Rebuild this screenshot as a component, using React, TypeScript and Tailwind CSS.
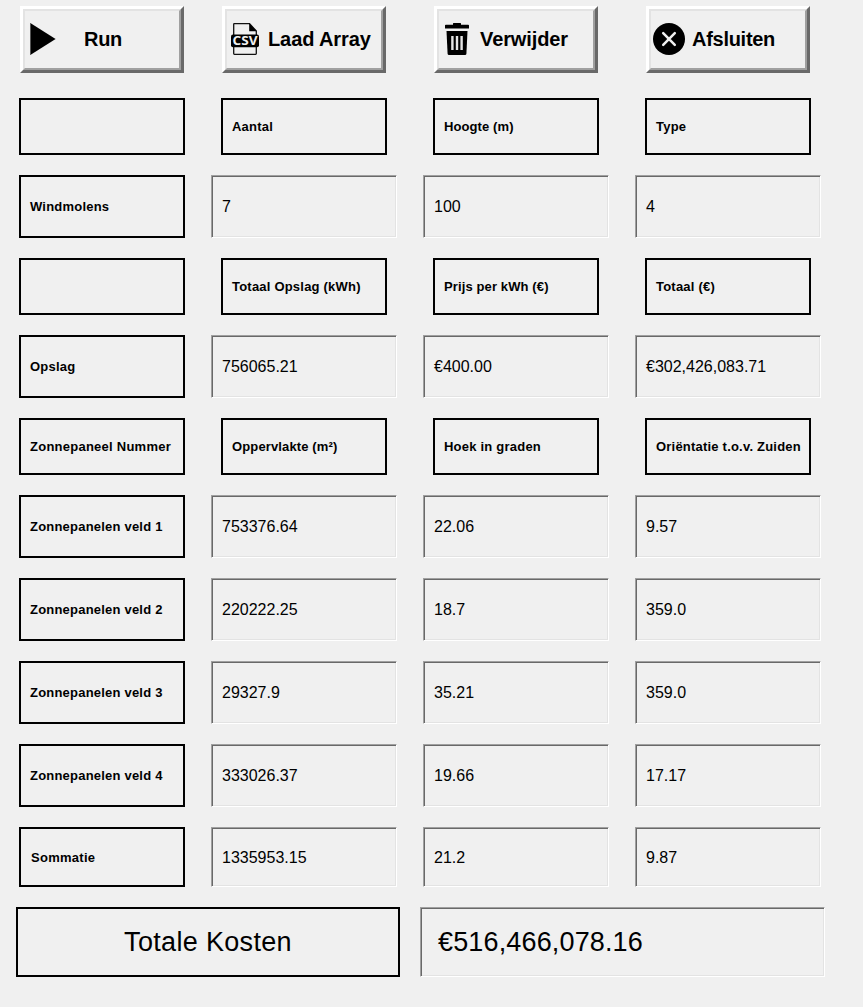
import type { ReactNode } from "react";

const PlayIcon = () => (
  <svg width="26" height="32" viewBox="0 0 26 32" className="shrink-0">
    <path d="M0.3 0 L25.6 16 L0.3 32 Z" fill="#000" />
    <path d="M0.5 0.5 V31.5" stroke="#555" strokeWidth="1" />
  </svg>
);

const CsvIcon = () => (
  <svg width="28" height="32" viewBox="0 0 28 32" className="shrink-0">
    <path d="M2.7 12 V1.4 Q2.7 0.6 3.4 0.6 H18.5 L25.3 8 V12 M2.7 23 V30.6 Q2.7 31.3 3.4 31.3 H24.6 Q25.3 31.3 25.3 30.6 V23" fill="none" stroke="#111" strokeWidth="1.3" />
    <path d="M18.2 0.2 L25.8 8.3 H18.2 Z" fill="#000" />
    <rect x="0" y="11.4" width="28" height="12.8" rx="2" fill="#000" />
    <text x="14" y="22.2" textAnchor="middle" textLength="25" lengthAdjust="spacingAndGlyphs" fill="#f0f0f0" className="font-['Open_Sans',sans-serif] text-[12.5px] font-bold">CSV</text>
  </svg>
);

const TrashIcon = () => (
  <svg width="24" height="32" viewBox="0 0 24 32" className="shrink-0">
    <path d="M8 1.7 V0.6 Q8 0 8.6 0 H15.4 Q16 0 16 0.6 V1.7 H23.2 Q24 1.7 24 2.4 V5.6 H0 V2.4 Q0 1.7 0.8 1.7 Z" fill="#000" />
    <path d="M1.5 8 H22.5 L21.4 30.8 Q21.3 32 20 32 H4 Q2.7 32 2.6 30.8 Z" fill="#000" />
    <path d="M7.4 13 V27 M12 13 V27 M16.6 13 V27" stroke="#e6e6e6" strokeWidth="2.4" fill="none" />
  </svg>
);

const CloseIcon = () => (
  <svg width="32" height="32" viewBox="0 0 32 32" className="shrink-0">
    <circle cx="16" cy="16" r="16" fill="#000" />
    <path d="M10.2 10.2 L21.8 21.8 M21.8 10.2 L10.2 21.8" stroke="#f0f0f0" strokeWidth="2.5" strokeLinecap="round" />
  </svg>
);

function ToolButton({ icon, text, pad, gap, tracking }: { icon: ReactNode; text: string; pad: string; gap: string; tracking: string }) {
  return (
    <button className="h-[67px] w-[164px] justify-self-center border-[3px] border-t-white border-r-[#696969] border-b-[#696969] border-l-white">
      <span className={`flex h-full items-center border-2 border-t-[#e3e3e3] border-r-[#a0a0a0] border-b-[#a0a0a0] border-l-[#e3e3e3] pb-px ${pad} ${gap}`}>
        {icon}
        <span className={`text-[20px] leading-6 font-bold whitespace-nowrap ${tracking}`}>{text}</span>
      </span>
    </button>
  );
}

const labelTuning: Record<string, string> = {
  "Oppervlakte (m²)": "pl-[9px] tracking-[0.13px]",
  "Prijs per kWh (€)": "pl-[9px] tracking-[0.12px]",
  "Hoogte (m)": "pl-[9px] tracking-[0.1px]",
  "Zonnepaneel Nummer": "pl-[9px] tracking-[0.25px]",
  "Hoek in graden": "pl-[9px] tracking-[0.22px]",
  "Sommatie": "pl-[10px] tracking-[0.28px] pt-[2px]",
};

function Label({ text }: { text: string }) {
  const tuning = labelTuning[text] ?? "pl-[9px] tracking-[0.21px]";
  return (
    <div className={`flex h-full w-[166px] items-center justify-self-center border-2 border-black text-[13px] leading-4 font-bold whitespace-nowrap ${tuning}`}>
      {text}
    </div>
  );
}

const sunken =
  "flex items-center border border-t-[#a0a0a0] border-l-[#a0a0a0] border-r-white border-b-white shadow-[inset_1px_1px_0_#696969,inset_-1px_-1px_0_#e3e3e3] whitespace-nowrap";

function Value({ text, low }: { text: string; low: boolean }) {
  return <div className={`${sunken} h-full w-full pl-[10px] text-[16px] leading-5 ${low ? "pt-[2px]" : ""}`}>{text}</div>;
}

type Row = { kind: "head" | "data"; height: string; cells: string[] };

const rows: Row[] = [
  { kind: "head", height: "h-[57px]", cells: ["", "Aantal", "Hoogte (m)", "Type"] },
  { kind: "data", height: "h-[63px]", cells: ["Windmolens", "7", "100", "4"] },
  { kind: "head", height: "h-[57px]", cells: ["", "Totaal Opslag (kWh)", "Prijs per kWh (€)", "Totaal (€)"] },
  { kind: "data", height: "h-[63px]", cells: ["Opslag", "756065.21", "€400.00", "€302,426,083.71"] },
  { kind: "head", height: "h-[57px]", cells: ["Zonnepaneel Nummer", "Oppervlakte (m²)", "Hoek in graden", "Oriëntatie t.o.v. Zuiden"] },
  { kind: "data", height: "h-[63px]", cells: ["Zonnepanelen veld 1", "753376.64", "22.06", "9.57"] },
  { kind: "data", height: "h-[63px]", cells: ["Zonnepanelen veld 2", "220222.25", "18.7", "359.0"] },
  { kind: "data", height: "h-[63px]", cells: ["Zonnepanelen veld 3", "29327.9", "35.21", "359.0"] },
  { kind: "data", height: "h-[63px]", cells: ["Zonnepanelen veld 4", "333026.37", "19.66", "17.17"] },
  { kind: "data", height: "h-[60px]", cells: ["Sommatie", "1335953.15", "21.2", "9.87"] },
];

const columns = "grid grid-cols-[166px_186px_186px_186px] gap-x-[26px] pl-[19px]";

export default function App() {
  return (
    <main className="h-[1007px] w-[863px] overflow-hidden bg-[#f0f0f0] pt-[6px] font-['Liberation_Sans',Arial,sans-serif] text-black">
      <div className={`${columns} mb-[25px]`}>
        <ToolButton icon={<PlayIcon />} text="Run" pad="pl-[5px]" gap="gap-[28px]" tracking="tracking-[-0.3px]" />
        <ToolButton icon={<CsvIcon />} text="Laad Array" pad="pl-[4px]" gap="gap-[9px]" tracking="tracking-[-0.1px]" />
        <ToolButton icon={<TrashIcon />} text="Verwijder" pad="pl-[6px]" gap="gap-[11px]" tracking="tracking-[-0.1px]" />
        <ToolButton icon={<CloseIcon />} text="Afsluiten" pad="pl-[2px]" gap="gap-[7px]" tracking="tracking-[-0.28px]" />
      </div>
      <div className="flex flex-col gap-5">
        {rows.map((row, i) => (
          <div key={i} className={`${columns} ${row.height}`}>
            {row.cells.map((cell, j) =>
              row.kind === "head" || j === 0 ? (
                <Label key={j} text={cell} />
              ) : (
                <Value key={j} text={cell} low={i === rows.length - 1} />
              )
            )}
          </div>
        ))}
        <div className="flex h-[70px] gap-5 pl-4">
          <div className="flex w-[384px] items-center justify-center border-2 border-black text-[27px] leading-8 tracking-[0.32px]">Totale Kosten</div>
          <div className={`${sunken} w-[405px] pl-[17px] text-[27px] leading-8 tracking-[0.15px]`}>€516,466,078.16</div>
        </div>
      </div>
    </main>
  );
}
